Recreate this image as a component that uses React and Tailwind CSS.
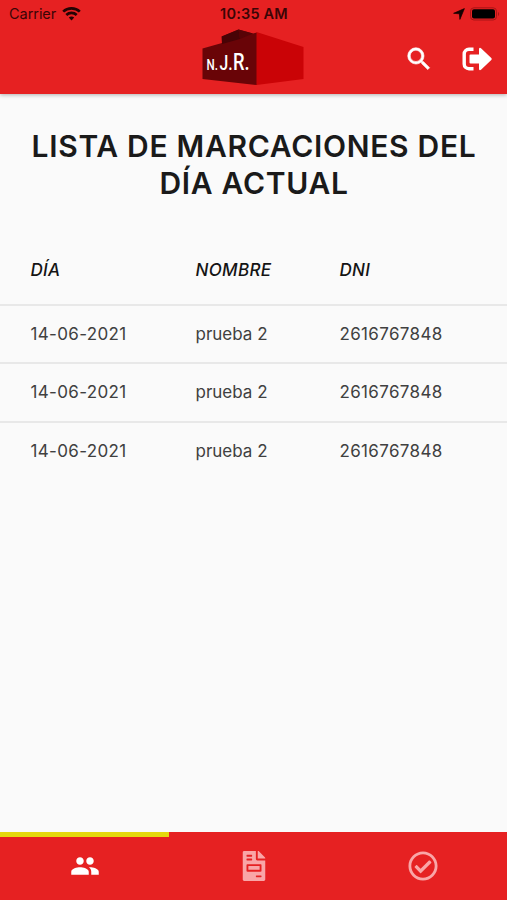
import React, { useState } from 'react';
import { MdPeople, MdSearch } from 'react-icons/md';
import { FaFileInvoice, FaRegCheckCircle } from 'react-icons/fa';

const rows = [
  { id: 1, dia: '14-06-2021', nombre: 'prueba 2', dni: '2616767848' },
  { id: 2, dia: '14-06-2021', nombre: 'prueba 2', dni: '2616767848' },
  { id: 3, dia: '14-06-2021', nombre: 'prueba 2', dni: '2616767848' },
];

const tabs = [
  { id: 'people', label: 'Personal', Icon: MdPeople },
  { id: 'report', label: 'Reporte', Icon: FaFileInvoice },
  { id: 'check', label: 'Marcar', Icon: FaRegCheckCircle },
];

export default function App() {
  const [activeTab, setActiveTab] = useState('people');

  return (
    <div className="w-[507px] h-[900px] flex flex-col overflow-hidden bg-[#fafafa] font-['Inter',sans-serif]">
      <header className="h-[94px] shrink-0 bg-[#e62122] shadow-[0_1px_4px_rgba(0,0,0,0.3)]">
        <StatusBar />
        <div className="h-[66px] grid grid-cols-3 pr-[15px] pl-[14px]">
          <div />
          <div className="flex justify-center items-start">
            <Logo />
          </div>
          <div className="flex items-start justify-end text-white pt-4">
            <button type="button" aria-label="Buscar" className="mr-[28px]">
              <MdSearch size={30} className="[&>path:last-child]:stroke-white [&>path:last-child]:[stroke-width:0.5px]" />
            </button>
            <button type="button" aria-label="Salir" className="pt-[3px]">
              <LogoutIcon />
            </button>
          </div>
        </div>
      </header>

      <main className="flex-1">
        <h1 className="pt-[34px] pl-px text-center text-[30px] leading-[37px] font-semibold tracking-[0.7px] text-[#1a1a1a]">
          LISTA DE MARCACIONES DEL<br />DÍA ACTUAL
        </h1>

        {/* Table */}
        <div className="mt-[34px] text-[17px] tracking-[0.35px]">
          <div className="h-[67.5px] pt-px grid grid-cols-[165px_144px_1fr] items-center pl-[30.5px] italic font-medium text-[#141414]">
            <span>DÍA</span>
            <span>NOMBRE</span>
            <span>DNI</span>
          </div>
          {rows.map(row => (
            <Row key={row.id} row={row} />
          ))}
        </div>
      </main>

      {/* Bottom tabs */}
      <nav className="h-[68px] shrink-0 grid grid-cols-3 bg-[#e62122]">
        {tabs.map(({ id, label, Icon }) => (
          <button
            key={id}
            type="button"
            aria-label={label}
            onClick={() => setActiveTab(id)}
            className={`flex items-center justify-center border-t-[5px] pb-[5px] ${
              activeTab === id ? 'border-[#e5d80e] text-white' : 'border-transparent text-[#f9a6a7]'
            }`}
          >
            <Icon size={30} />
          </button>
        ))}
      </nav>
    </div>
  );
}

function Row({ row }) {
  return (
    <div className="h-[58.6px] pt-px grid grid-cols-[165px_144px_1fr] items-center pl-[30.5px] border-t-2 border-[#e8e8e8] text-[#404040]">
      <span>{row.dia}</span>
      <span className="tracking-[0]">{row.nombre}</span>
      <span>{row.dni}</span>
    </div>
  );
}

function StatusBar() {
  return (
    <div className="h-[28px] grid grid-cols-3 items-center pl-[9px] pr-[7px] text-[#3a0506]">
      <div className="flex items-center gap-[6px] text-[14.5px]">
        <span className="tracking-[-0.05px]">Carrier</span>
        <svg width="19" height="15" viewBox="0 0 19 15" fill="none" stroke="#240303" strokeWidth="2.7" className="-mt-[2px]">
          <path d="M1.2 5.6C5.7 1.2 13.3 1.2 17.8 5.6" />
          <path d="M4.3 8.9C7.2 6.2 11.8 6.2 14.7 8.9" />
          <path d="M9.5 14.5l-2.7-2.9c1.5-1.5 3.9-1.5 5.4 0z" fill="#240303" stroke="none" />
        </svg>
      </div>
      <span className="text-center text-[14.5px] font-semibold tracking-[0.2px] -ml-[1px]">10:35 AM</span>
      <div className="flex items-center justify-end gap-[5px]">
        <svg width="12" height="12" viewBox="0 0 12 12" fill="#160202" stroke="#160202" strokeWidth="0.7">
          <path d="M11.4.6L6.9 11.4 6.4 5.8.6 5.3z" />
        </svg>
        <svg width="30" height="14" viewBox="0 0 30 14">
          <rect x="0.5" y="0.8" width="26" height="12.2" rx="3.4" fill="none" stroke="#a91516" />
          <rect x="2" y="2.3" width="23" height="9.2" rx="2" fill="#000" />
          <path d="M28 5v4c1.5-.5 1.5-3.5 0-4z" fill="#a91516" />
        </svg>
      </div>
    </div>
  );
}

function Logo() {
  return (
    <svg width="102" height="58" viewBox="202 28 102 58" aria-label="N.J.R.">
      <path d="M202.5 48.5L222 43V36.5L238.5 29.5 253 33.5 257 32.5V85L202.5 79z" fill="#690407" />
      <path d="M221.5 36.5L238.5 29.5 240 39 222 44z" fill="#480306" />
      <path d="M238.5 29.5L253 33.5 240 39z" fill="#580306" />
      <path d="M256.5 32L303.5 47V79L256.5 85z" fill="#ca0306" />
      {/* Each letter grows towards the corner of the building */}
      <g fill="#fff" fontFamily="Roboto, sans-serif" fontWeight="500">
        <text transform="translate(206.5 70) scale(0.75 1)" fontSize="15.5">N.</text>
        <text transform="translate(219.5 70) scale(0.75 1)" fontSize="21">J.</text>
        <text transform="translate(233 70) scale(0.78 1)" fontSize="23.5">R.</text>
      </g>
    </svg>
  );
}

function LogoutIcon() {
  return (
    <svg width="30" height="24" viewBox="0 0 30 24" fill="none">
      <path d="M11.5 2.3H7C4.2 2.3 2.2 4.2 2.2 7v10c0 2.8 2 4.7 4.8 4.7h4.5" stroke="#fff" strokeWidth="3.4" />
      <path d="M8.5 7.5H17V1.8q.6-1.8 2-.6L29.3 11q.8 1 0 2L19 22.8q-1.4 1.2-2-.6V16.5H8.5q-1 0-1-1v-7q0-1 1-1z" fill="#fff" />
    </svg>
  );
}
